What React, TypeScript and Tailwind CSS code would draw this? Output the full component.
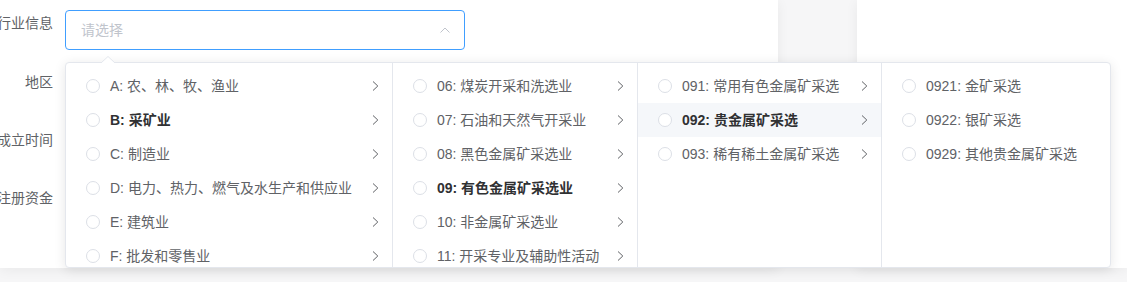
const font = "font-['Liberation_Sans','Noto_Sans_CJK_SC',sans-serif]";

type Node = { label: string; active?: boolean; leaf?: boolean };

const menus: { width: string; hoverIndex?: number; items: Node[] }[] = [
  {
    width: "w-[327px]",
    items: [
      { label: "A: 农、林、牧、渔业" },
      { label: "B: 采矿业", active: true },
      { label: "C: 制造业" },
      { label: "D: 电力、热力、燃气及水生产和供应业" },
      { label: "E: 建筑业" },
      { label: "F: 批发和零售业" },
    ],
  },
  {
    width: "w-[245px]",
    items: [
      { label: "06: 煤炭开采和洗选业" },
      { label: "07: 石油和天然气开采业" },
      { label: "08: 黑色金属矿采选业" },
      { label: "09: 有色金属矿采选业", active: true },
      { label: "10: 非金属矿采选业" },
      { label: "11: 开采专业及辅助性活动" },
    ],
  },
  {
    width: "w-[244px]",
    hoverIndex: 1,
    items: [
      { label: "091: 常用有色金属矿采选" },
      { label: "092: 贵金属矿采选", active: true },
      { label: "093: 稀有稀土金属矿采选" },
    ],
  },
  {
    width: "flex-1",
    items: [
      { label: "0921: 金矿采选", leaf: true },
      { label: "0922: 银矿采选", leaf: true },
      { label: "0929: 其他贵金属矿采选", leaf: true },
    ],
  },
];

function ChevronRight() {
  return (
    <svg width="10" height="14" viewBox="0 0 10 14" className="mr-[12px] shrink-0">
      <path d="M3 2.5 L7.8 7 L3 11.5" fill="none" stroke="#606266" strokeWidth="1" />
    </svg>
  );
}

function Menu({ width, hoverIndex, items, last }: { width: string; hoverIndex?: number; items: Node[]; last?: boolean }) {
  return (
    <div className={`${width} h-[204px] overflow-hidden py-[6px] ${last ? "" : "border-r border-[#e4e7ed]"}`}>
      {items.map((n, i) => (
        <div
          key={n.label}
          className={`flex h-[34px] items-center pl-[20px] ${i === hoverIndex ? "bg-[#f5f7fa]" : ""}`}
        >
          <span className="h-[14px] w-[14px] shrink-0 rounded-full border border-[#dcdfe6] bg-white" />
          <span
            className={`ml-[10px] flex-1 whitespace-nowrap text-[14px] ${
              n.active ? "font-bold text-[#303133]" : "text-[#606266]"
            }`}
          >
            {n.label}
          </span>
          {!n.leaf && <ChevronRight />}
        </div>
      ))}
    </div>
  );
}

function Label({ text }: { text: string }) {
  return (
    <div className="flex w-[53px] shrink-0 justify-end whitespace-nowrap pt-[3px] text-[14px] leading-[20px] text-[#606266]">
      {text}
    </div>
  );
}

export default function App() {
  return (
    <div className={`relative h-[282px] w-[1127px] overflow-hidden bg-[#f6f6f7] ${font}`}>
      <div className="flex h-[268px] gap-[79px]">
        <div className="h-full w-[778px] bg-white pt-[10px] shadow-[0_2px_12px_rgba(0,0,0,0.06)]">
          <div className="flex h-[59px] items-start">
            <Label text="行业信息" />
            <div className="ml-[12px] flex h-[40px] w-[400px] items-center justify-between rounded-[4px] border border-[#409eff] bg-white pl-[15px] pr-[12px]">
              <span className="text-[14px] text-[#c0c4cc]">请选择</span>
              <svg width="14" height="14" viewBox="0 0 14 14">
                <path d="M2.5 9.5 L7 5 L11.5 9.5" fill="none" stroke="#c0c4cc" strokeWidth="1" />
              </svg>
            </div>
          </div>
          <div className="flex h-[58px] items-start">
            <Label text="地区" />
          </div>
          <div className="flex h-[58px] items-start">
            <Label text="成立时间" />
          </div>
          <div className="flex h-[58px] items-start">
            <Label text="注册资金" />
          </div>
        </div>
        <div className="h-full flex-1 bg-white shadow-[0_2px_12px_rgba(0,0,0,0.06)]" />
      </div>

      <div className="absolute left-[65px] top-[62px] w-[1046px] rounded-[4px] border border-[#e4e7ed] bg-white shadow-[0_2px_12px_rgba(0,0,0,0.1)]">
        <svg width="14" height="7" viewBox="0 0 14 7" className="absolute left-[35px] top-[-7px]">
          <path d="M0 7 L7 0.5 L14 7 Z" fill="white" />
          <path d="M0 7 L7 0.5 L14 7" fill="none" stroke="#e4e7ed" strokeWidth="1" />
        </svg>
        <div className="flex">
          {menus.map((m, i) => (
            <Menu key={i} width={m.width} hoverIndex={m.hoverIndex} items={m.items} last={i === menus.length - 1} />
          ))}
        </div>
      </div>
    </div>
  );
}
